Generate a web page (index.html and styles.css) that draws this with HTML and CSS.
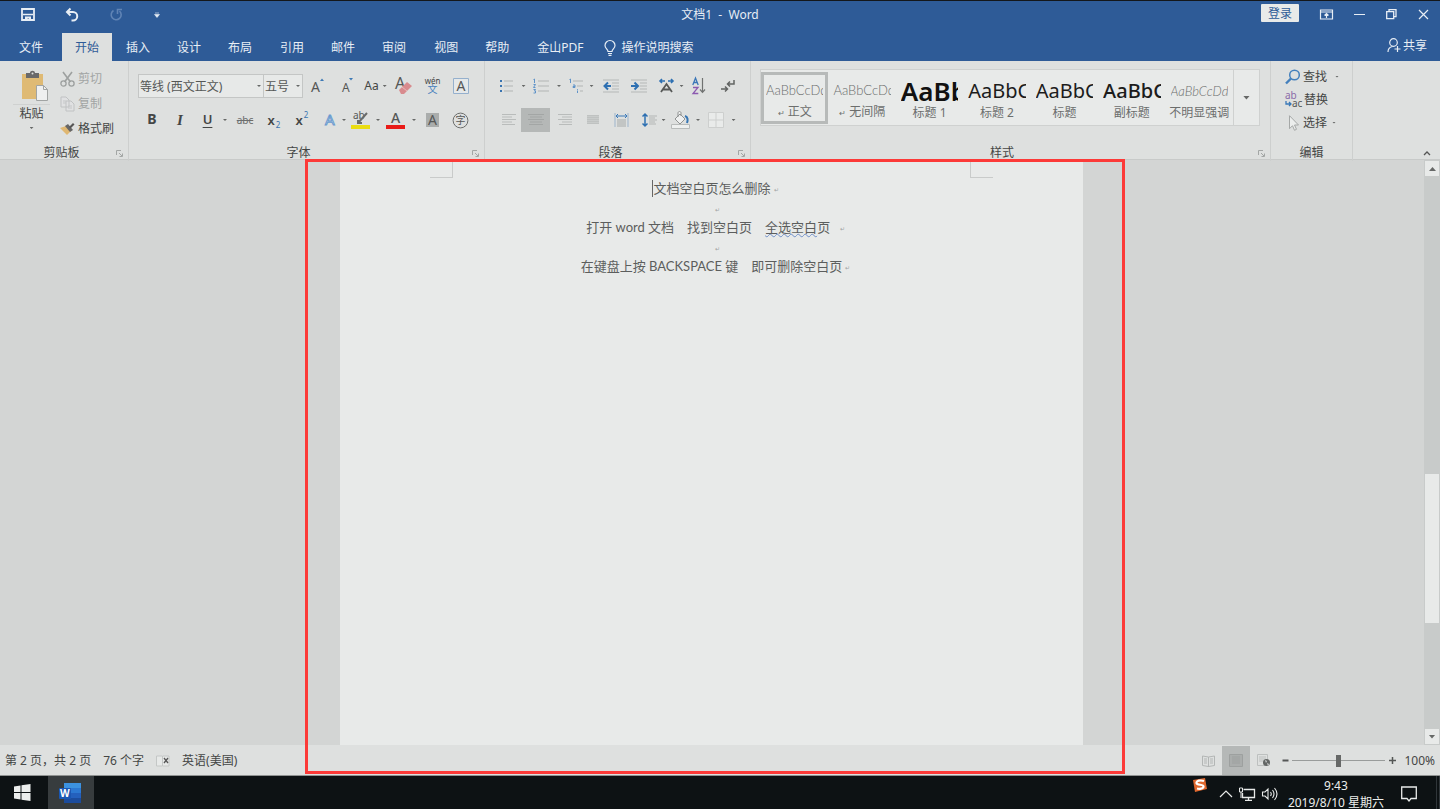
FILE: index.html
```html
<!DOCTYPE html>
<html lang="zh-CN">
<head>
<meta charset="utf-8">
<title>文档1 - Word</title>
<link rel="stylesheet" href="styles.css">
</head>
<body>
<header class="titlebar">
  <div class="quick">
    <button aria-label="保存"><svg width="14" height="14" viewBox="0 0 14 14"><path d="M1 1h12v11H1z" fill="none" stroke="#e8eef5" stroke-width="1.800"/><path d="M2 6.500h10" stroke="#e8eef5" stroke-width="1.500"/><path d="M4 8.500h6V13H8v-2.500H6.500V13H4z" fill="#e8eef5"/></svg></button>
    <button aria-label="撤消"><svg width="14" height="14" viewBox="0 0 14 14"><path d="M5.500.5 2 4l3.500 3.500M2 4h6a4 4 0 0 1 0 8.500H6.500" fill="none" stroke="#e8eef5" stroke-width="2"/></svg></button>
    <button aria-label="重复"><svg width="14" height="14" viewBox="0 0 14 14"><path d="M10.500 3a5 5 0 1 1-6-.5M8.500 6V1.500H13" fill="none" stroke="#6084b5" stroke-width="1.600"/></svg></button>
    <button aria-label="自定义快速访问工具栏"><svg width="6" height="6" viewBox="0 0 6 6"><path d="M1 1h4M0.500 2.500h5L3 5.500z" fill="#e8eef5" stroke="#e8eef5" stroke-width=".6"/></svg></button>
  </div>
  <h1 class="doc-title">文档1&nbsp; -&nbsp; Word</h1>
  <div class="window-tools">
    <button class="login">登录</button>
    <button aria-label="功能区显示选项"><svg width="13" height="11" viewBox="0 0 13 11"><path d="M.5 1h12v9H.5zM.5 3h12M6.500 9V5M4.500 6.500l2-2 2 2" fill="none" stroke="#e8eef5" stroke-width="1.200"/></svg></button>
    <button aria-label="最小化"><svg width="11" height="11" viewBox="0 0 11 11"><path d="M0 5.500h11" stroke="#e8eef5"/></svg></button>
    <button aria-label="还原"><svg width="11" height="11" viewBox="0 0 11 11"><path d="M.7 2.700h7v7h-7zM3 2.500V.7h7v7H8" fill="none" stroke="#e8eef5" stroke-width="1.300"/></svg></button>
    <button aria-label="关闭"><svg width="11" height="11" viewBox="0 0 11 11"><path d="m1 1 9 9m0-9-9 9" stroke="#e8eef5" stroke-width="1.200"/></svg></button>
  </div>
</header>
<nav class="tabs">
  <button class="file">文件</button>
  <button class="active">开始</button>
  <button>插入</button>
  <button>设计</button>
  <button>布局</button>
  <button class="wide">引用</button>
  <button>邮件</button>
  <button>审阅</button>
  <button class="wide">视图</button>
  <button>帮助</button>
  <button class="wide">金山PDF</button>
  <button class="tell"><svg width="12" height="16" viewBox="0 0 12 16"><path d="M4 11.500C4 9 1 8.500 1 5.500a5 5 0 0 1 10 0c0 3-3 3.500-3 6zM4 13.500h4M4.500 15.300h3" fill="none" stroke="#e8eef5" stroke-width="1.200"/></svg>操作说明搜索</button>
  <button class="share"><svg width="14" height="15" viewBox="0 0 14 15"><circle cx="6.500" cy="4.500" r="3.800" fill="none" stroke="#e8eef5" stroke-width="1.200"/><path d="M1 14c0-3 2-5 4.500-5.500M10.500 8v6M7.500 11h6" fill="none" stroke="#e8eef5" stroke-width="1.200"/></svg>共享</button>
</nav>

<main class="ribbon">
  <section class="group clipboard">
    <div class="clip-body">
      <button class="paste">
        <svg width="28" height="30" viewBox="0 0 28 30"><path d="M1 3h21v25H1z" fill="#dfba74"/><path d="M5 2h4c0-3 5-3 5 0h4v5H5z" fill="#69696a"/><circle cx="11.500" cy="2.500" r="1" fill="#dee0df"/><path d="M15.500 14.500h7l4 4v11h-11z" fill="#eff0f0" stroke="#a1a4a3"/><path d="M22.500 14.500v4h4" fill="none" stroke="#a1a4a3"/></svg>
        <span class="paste-label">粘贴</span><i class="caret"></i>
      </button>
      <div class="clip-list">
        <button class="dim"><svg width="15" height="16" viewBox="0 0 15 16"><path d="M3 1l7.500 10M12 1 4.500 11" stroke="#9da09f" stroke-width="1.600"/><circle cx="3.500" cy="12.500" r="2.600" fill="none" stroke="#9da09f" stroke-width="1.300"/><circle cx="11.500" cy="12.500" r="2.600" fill="none" stroke="#9da09f" stroke-width="1.300"/></svg>剪切</button>
        <button class="dim"><svg width="15" height="16" viewBox="0 0 15 16"><path d="M1 1h5l3 3v7H1zM6 5h5l3 3v7H6z" fill="#e0e1e2" stroke="#c0c2c3"/><path d="M3 5h3M3 7h3M8 10h4M8 12h4" stroke="#c5c7c8"/></svg>复制</button>
        <button><svg width="15" height="14" viewBox="0 0 15 14"><path d="m0 6 6-2 5 5-4 4z" fill="#dfb772"/><path d="m5 4 3-2 5 6-3 2z" fill="#666"/><path d="m9 5 4-4 1.500 1.500-4 4z" fill="#565656"/></svg>格式刷</button>
      </div>
    </div>
    <footer>剪贴板</footer><svg class="launcher" width="7" height="7" viewBox="0 0 7 7"><path d="M.5 5V.5H5M3 3l3 3M6.500 3.500v3h-3" fill="none" stroke="#a3a6a5"/></svg>
  </section>

  <section class="group font">
    <div class="row font-top">
      <label class="combo"><select aria-label="字体"><option>等线 (西文正文)</option></select><i class="caret"></i></label>
      <label class="combo size"><select aria-label="字号"><option>五号</option></select><i class="caret"></i></label>
      <button aria-label="增大字号"><svg width="16" height="18" viewBox="0 0 16 18"><text x="1" y="15" font-size="14">A</text><path d="m10 4 2-2.500L14 4z" fill="#3d79b5"/></svg></button>
      <button aria-label="减小字号"><svg width="16" height="18" viewBox="0 0 16 18"><text x="3" y="15" font-size="12">A</text><path d="m10 1 2 2.500L14 1z" fill="#3d79b5"/></svg></button>
      <button class="with-caret" aria-label="更改大小写">Aa<i class="caret"></i></button>
      <button aria-label="清除格式"><svg width="18" height="20" viewBox="0 0 18 20"><text x="0" y="13" font-size="16">A</text><path d="m4 14 8-8 5 4-8 8H6z" fill="#d88b8e"/><path d="m7 11 5 4" stroke="#e8b8b9"/></svg></button>
      <button class="pinyin" aria-label="拼音指南"><small>wén</small><span>文</span></button>
      <button aria-label="字符边框"><svg width="16" height="17" viewBox="0 0 16 17"><path d="M.5.5h15v15H.5z" fill="#e5e8e9" stroke="#95b0cd"/><text x="3.500" y="13" font-size="14">A</text></svg></button>
    </div>
    <div class="row font-bottom">
      <button class="bold">B</button><button class="italic">I</button><button class="under">U</button><i class="caret"></i>
      <button class="strike">abc</button>
      <button class="script">x<sub>2</sub></button><button class="script">x<sup>2</sup></button>
      <button aria-label="文本效果"><svg width="16" height="18" viewBox="0 0 16 18"><text class="outline" x="4" y="14" font-size="15">A</text></svg></button><i class="caret"></i>
      <button aria-label="突出显示"><svg width="20" height="20" viewBox="0 0 20 20"><text x="2" y="9" font-size="10">ab</text><path d="m7 13 9-10M7 10v3h4" stroke="#696b6a" stroke-width="2" fill="none"/><path d="M0 15h19v4H0z" fill="#eadd12"/></svg></button><i class="caret"></i>
      <button aria-label="字体颜色"><svg width="20" height="20" viewBox="0 0 20 20"><text x="5" y="13" font-size="14" font-weight="500">A</text><path d="M0 15h19v4H0z" fill="#e91b18"/></svg></button><i class="caret"></i>
      <button aria-label="字符底纹"><svg width="14" height="14" viewBox="0 0 14 14"><path d="M0 0h13v14H0z" fill="#aaadac"/><text x="2" y="12" font-size="14">A</text></svg></button>
      <button aria-label="带圈字符"><svg width="16" height="17" viewBox="0 0 16 17"><circle cx="7.500" cy="8.500" r="7.400" fill="none" stroke="#6b6d6c"/><text x="2.500" y="12" font-size="10">字</text></svg></button>
    </div>
    <footer>字体</footer><svg class="launcher" width="7" height="7" viewBox="0 0 7 7"><path d="M.5 5V.5H5M3 3l3 3M6.500 3.500v3h-3" fill="none" stroke="#a3a6a5"/></svg>
  </section>

  <section class="group para">
    <div class="row para-top">
      <button aria-label="项目符号"><svg width="14" height="14" viewBox="0 0 14 14"><path d="M4 2h9M4 7h9M4 12h9" stroke="#b2b5b4"/><path d="M0 1h2v2H0zM0 6h2v2H0zM0 11h2v2H0z" fill="#3a74b0"/></svg></button><i class="caret"></i>
      <button aria-label="编号"><svg width="16" height="16" viewBox="0 0 16 16"><path d="M5 3h11M5 8h11M5 13h11" stroke="#b2b5b4"/><path d="M.5 1.500 1.500 1v4M.5 6.500h2L.5 9.500h2M.5 11.500h2L1.500 13h1v2h-2" fill="none" stroke="#5f93c8"/></svg></button><i class="caret"></i>
      <button aria-label="多级列表"><svg width="20" height="16" viewBox="0 0 20 16"><path d="M7 3h10M11 8h6M14 13h3" stroke="#b2b5b4"/><path d="M3.500 1.500 4.500 1v4M7 7h2v2.500H7V8.500h2M11.500 11v.8M11.500 12.500V15" fill="none" stroke="#5f93c8"/></svg></button><i class="caret"></i>
      <button aria-label="减少缩进"><svg width="17" height="14" viewBox="0 0 17 14"><path d="M0 1h16M9 4h7M9 7h7M9 10h7M0 13h16" stroke="#b5b8b7"/><path d="M8 7H2M5 3.500 1.500 7 5 10.500" fill="none" stroke="#2e70b2" stroke-width="2"/></svg></button>
      <button aria-label="增加缩进"><svg width="17" height="14" viewBox="0 0 17 14"><path d="M0 1h16M9 4h7M9 7h7M9 10h7M0 13h16" stroke="#b5b8b7"/><path d="M0 7h6M3.500 3.500 7 7l-3.500 3.500" fill="none" stroke="#2e70b2" stroke-width="2"/></svg></button>
      <button aria-label="中文版式"><svg width="16" height="16" viewBox="0 0 16 16"><path d="M2 3h5M4 1 2 3l2 2M10 3h5M13 1l2 2-2 2" fill="none" stroke="#2e70b2" stroke-width="1.600"/><path d="m3 14 5.500-8 5.500 8M5 11.500h7" fill="none" stroke="#575958" stroke-width="1.800"/></svg></button><i class="caret"></i>
      <button aria-label="排序"><svg width="14" height="18" viewBox="0 0 14 18"><path d="m.8 8 2.700-7 2.700 7M1.800 5.500h3.500" fill="none" stroke="#3a76b7" stroke-width="1.300"/><path d="M1 10.500h5L1 16.500h5.300" fill="none" stroke="#8c5ab0" stroke-width="1.300"/><path d="M10.500 1v14M8 12.500l2.500 2.800 2.500-2.800" fill="none" stroke="#707271" stroke-width="1.200"/></svg></button>
      <button aria-label="显示编辑标记"><svg width="15" height="14" viewBox="0 0 15 14"><path d="M13 1v4H7M9 2.500 6.500 5 9 7.500M0 10h6M4 7.500 6.500 10 4 12.500" fill="none" stroke="#626463" stroke-width="1.500"/></svg></button>
    </div>
    <div class="row para-bottom">
      <button aria-label="左对齐"><svg width="14" height="12" viewBox="0 0 14 12"><path d="M0 .5h14M0 3h10M0 5.500h14M0 8h10M0 10.500h13" stroke="#b9bcbb"/></svg></button>
      <button class="pressed" aria-label="居中"><svg width="16" height="12" viewBox="0 0 16 12"><path d="M0 .5h16M2 3h12M0 5.500h16M2 8h12M1 10.500h14" stroke="#a3a6a5"/></svg></button>
      <button aria-label="右对齐"><svg width="14" height="12" viewBox="0 0 14 12"><path d="M0 .5h14M4 3h10M0 5.500h14M4 8h10M1 10.500h13" stroke="#b9bcbb"/></svg></button>
      <button aria-label="两端对齐"><svg width="12" height="10" viewBox="0 0 12 10"><path d="M0 0h12v9H0z" fill="#c9cccb"/><path d="M0 .5h12M0 2.500h12M0 4.500h12M0 6.500h12M0 8.500h12" stroke="#bfc2c1"/></svg></button>
      <button aria-label="分散对齐"><svg width="15" height="15" viewBox="0 0 15 15"><path d="M1 0v14M14 0v14" stroke="#9db4cb"/><path d="M3 6h9v8H3z" fill="#c2c5c4"/><path d="M2 3h11M4 1 2 3l2 2M11 1l2 2-2 2" fill="none" stroke="#3978b8"/></svg></button>
      <button aria-label="行距"><svg width="16" height="14" viewBox="0 0 16 14"><path d="M5 1v12M2.500 3.500 5 1l2.500 2.500M2.500 10.500 5 13l2.500-2.500" fill="none" stroke="#2e70b2" stroke-width="1.500"/><path d="M9 3h8M9 5h6M9 7h8M9 9h6M9 11h7" stroke="#b3b6b5"/></svg></button><i class="caret"></i>
      <button aria-label="底纹"><svg width="20" height="18" viewBox="0 0 20 18"><path d="m9 3 5 5-5 5-5-5zM7 6V2c0-2 3-2 3 0v3" fill="#eff0f0" stroke="#909392"/><path d="M14 5c3 1 3 4 2 7" fill="none" stroke="#3776b3" stroke-width="2"/><path d="M.5 13.500h18v4H.5z" fill="#eef0ef" stroke="#b8bbba"/></svg></button><i class="caret"></i>
      <button aria-label="边框"><svg width="16" height="16" viewBox="0 0 16 16"><path d="M.5.5h15v15H.5zM8 0v16M0 8h16" fill="#e9ebea" stroke="#cdcfce"/></svg></button><i class="caret"></i>
    </div>
    <footer>段落</footer><svg class="launcher" width="7" height="7" viewBox="0 0 7 7"><path d="M.5 5V.5H5M3 3l3 3M6.500 3.500v3h-3" fill="none" stroke="#a3a6a5"/></svg>
  </section>

  <section class="group styles">
    <div class="gallery">
      <button class="chosen"><span class="sample">AaBbCcDd</span><span class="name"><small>↵</small> 正文</span></button>
      <button><span class="sample">AaBbCcDd</span><span class="name"><small>↵</small> 无间隔</span></button>
      <button><span class="sample h1">AaBb</span><span class="name">标题 1</span></button>
      <button><span class="sample h2">AaBbC</span><span class="name">标题 2</span></button>
      <button><span class="sample h2">AaBbC</span><span class="name">标题</span></button>
      <button><span class="sample h2 strong">AaBbC</span><span class="name">副标题</span></button>
      <button><span class="sample slant">AaBbCcDd</span><span class="name">不明显强调</span></button>
      <button class="more" aria-label="其他样式"><i class="caret large"></i></button>
    </div>
    <footer>样式</footer><svg class="launcher" width="7" height="7" viewBox="0 0 7 7"><path d="M.5 5V.5H5M3 3l3 3M6.500 3.500v3h-3" fill="none" stroke="#a3a6a5"/></svg>
  </section>

  <section class="group edit">
    <div class="edit-list">
      <button><svg width="16" height="16" viewBox="0 0 16 16"><circle cx="9.500" cy="6" r="4.800" fill="none" stroke="#4480bd" stroke-width="1.500"/><path d="m6 9.500-5 5" stroke="#4480bd" stroke-width="2.400"/></svg>查找<i class="caret far"></i></button>
      <button><svg width="17" height="16" viewBox="0 0 17 16"><text class="from" x="0" y="7" font-size="10">ab</text><text x="7" y="15" font-size="10">ac</text><path d="M1 9v3h5M4 10l2 2-2 2" fill="none" stroke="#3978b8" stroke-width="1.300"/></svg>替换</button>
      <button><svg width="16" height="16" viewBox="0 0 16 16"><path d="M4.500.7v13l3-3 2 4.600 2-1-2-4.300h4z" fill="#eceeed" stroke="#a5a8a7"/></svg>选择<i class="caret"></i></button>
    </div>
    <footer>编辑</footer>
  </section>
  <button class="collapse" aria-label="折叠功能区"><svg width="8" height="6" viewBox="0 0 8 6"><path d="m1 5 3-3 3 3" fill="none" stroke="#555" stroke-width="1.300"/></svg></button>
</main>

<section class="workspace">
  <div class="canvas">
    <article class="page">
      <i class="corner left"></i><i class="corner right"></i>
      <p><span class="cursor"></span>文档空白页怎么删除<small>↵</small></p>
      <p class="empty"><small>↵</small></p>
      <p>打开 word 文档　找到空白页　<span class="wavy">全选空白</span>页 &nbsp;<small>↵</small></p>
      <p class="empty"><small>↵</small></p>
      <p>在键盘上按 BACKSPACE 键　即可删除空白页<small>↵</small></p>
    </article>
  </div>
  <div class="scrollbar">
    <button aria-label="向上滚动"><i class="caret large up"></i></button>
    <div class="track"><div class="thumb"></div></div>
    <button aria-label="向下滚动"><i class="caret large"></i></button>
  </div>
  <div class="highlight"></div>
</section>

<footer class="status">
  <span>第 2 页，共 2 页</span><span>76 个字</span>
  <svg width="14" height="12" viewBox="0 0 14 12"><path d="M.5 1h6v10h-6zM7 1h6v10H7" fill="#e7e9e8" stroke="#c4c7c6"/><path d="m8 3 4 5m0-5L8 8" stroke="#555" stroke-width="1.300"/></svg>
  <span>英语(美国)</span>
  <div class="views">
    <button aria-label="阅读视图"><svg width="13" height="12" viewBox="0 0 13 12"><path d="M6.500 2v10M.5 1l6 1 6-1v9.500l-6 1-6-1zM2 4h3M2 6h3M2 8h3M8 4h3M8 6h3M8 8h3" fill="none" stroke="#b3b6b5"/></svg></button>
    <button class="pressed" aria-label="页面视图"><svg width="14" height="13" viewBox="0 0 14 13"><path d="M.5.5h13v12H.5zM3 3h8M3 5h8M3 7h8M3 9h8" fill="#aaadac" stroke="#9da09f"/></svg></button>
    <button aria-label="Web 版式"><svg width="14" height="13" viewBox="0 0 14 13"><path d="M.5.5h10v11H.5zM2 3h7M2 5h7M2 7h5" fill="none" stroke="#bdc0bf"/><circle cx="9.500" cy="8.500" r="3.500" fill="#636665"/><path d="m8 6 2 1-1 2zM10 9l2 1-1 2z" fill="#d6d8d7"/></svg></button>
    <button class="zoom-btn" aria-label="缩小"><svg width="7" height="7" viewBox="0 0 7 7"><path d="M.5 3.500h6" stroke="#555756" stroke-width="2"/></svg></button>
    <input type="range" min="0" max="100" value="50" aria-label="显示比例">
    <button class="zoom-btn" aria-label="放大"><svg width="7" height="7" viewBox="0 0 7 7"><path d="M0 3.500h7M3.500 0v7" stroke="#555756" stroke-width="1.500"/></svg></button>
    <span class="percent">100%</span>
  </div>
</footer>

<footer class="taskbar">
  <button class="start" aria-label="开始"><svg width="17" height="17" viewBox="0 0 17 17"><path d="M0 2.500 6.500 1.500V8H0zM7.500 1.300 16.500 0v8h-9zM0 9h6.500v6.500L0 14.500zM7.500 9h9v8l-9-1.300z" fill="#eceeed"/></svg></button>
  <button class="word" aria-label="Word"><svg width="22" height="20" viewBox="0 0 22 20"><path d="M5 0h17v5H5z" fill="#3c92e0"/><path d="M5 5h17v5H5z" fill="#2c78d2"/><path d="M5 10h17v5H5z" fill="#2460bd"/><path d="M5 15h17v5H5z" fill="#1c4c9d"/><rect y="5" width="12" height="11" rx="1" fill="#1a57b3"/><text class="logo" x="1" y="14" font-size="10">W</text></svg></button>
  <div class="tray">
    <svg class="sogou" width="16" height="16" viewBox="0 0 16 16"><path d="m1 3 12-2 2 11-12 3z" fill="#df682f"/><path d="M12 4C9 3 4 3.500 4.500 6s7 1 7 3.500S7 12 5 11.500" fill="none" stroke="#fff" stroke-width="2.200"/></svg>
    <svg width="14" height="8" viewBox="0 0 14 8"><path d="m1 7 6-6 6 6" fill="none" stroke="#e8eae9" stroke-width="1.200"/></svg>
    <svg width="17" height="14" viewBox="0 0 17 14"><path d="M4.500 2.500h11v8H3.500V6M9.500 10v3M6 13.300h7" fill="none" stroke="#e8eae9" stroke-width="1.300"/><path d="M.5 1h3v4h-3zM2 5v6" fill="#0d1214" stroke="#e8eae9"/></svg>
    <svg width="16" height="14" viewBox="0 0 16 14"><path d="M.5 5h2.500l3-3v10L3 9H.5zM8.500 5q1.500 2 0 4M10.500 3q3 4 0 8M12.500 1q5 6 0 12" fill="none" stroke="#e8eae9" stroke-width="1.100"/></svg>
    <div class="clock"><time>9:43</time><span>2019/8/10 星期六</span></div>
    <svg class="note" width="16" height="16" viewBox="0 0 16 16"><path d="M.7 1h14.600v11.500H10L8 15l-2-2.500H.7z" fill="none" stroke="#e8eae9" stroke-width="1.300"/></svg>
  </div>
</footer>
</body>
</html>
```
FILE: styles.css
```css
* { box-sizing: border-box; }
body {
  margin: 0;
  height: 100vh;
  display: flex;
  flex-direction: column;
  overflow: hidden;
  background: #d3d5d4;
  color: #444645;
  font: 12px/16px "Noto Sans", "Noto Sans CJK SC", sans-serif;
}
button {
  display: flex;
  align-items: center;
  justify-content: center;
  margin: 0;
  padding: 0;
  border: 0;
  background: none;
  color: inherit;
  font: inherit;
  white-space: nowrap;
}
svg { display: block; flex: none; overflow: visible; }
svg text { fill: #555756; }
svg .outline { fill: #e2e8ee; stroke: #6b9bcf; stroke-width: 1; }
svg .from { fill: #8a6aa8; }
svg .logo { fill: #fff; font-weight: 700; }
.caret {
  display: block;
  flex: none;
  width: 4px;
  height: 2px;
  background: #666867;
  clip-path: polygon(0 0, 100% 0, 50% 100%);
  place-self: center;
}
.caret.large { width: 7px; height: 4px; }
.caret.up { transform: rotate(180deg); }

.titlebar {
  flex: none;
  display: grid;
  grid-template-columns: 1fr auto 1fr;
  height: 33px;
  border-top: 1px solid #14171a;
  background: #2e5b97;
  color: #e8eef5;
}
.quick { display: flex; align-items: center; padding: 0 0 4px 21px; gap: 30px; }
.quick button { min-width: 14px; }
.quick button:last-child { min-width: 8px; }
.doc-title { margin: 0; font-size: 12px; font-weight: 400; line-height: 28px; }
.window-tools { display: flex; justify-content: flex-end; gap: 21px; padding: 3px 11px 9px 0; }
.login { width: 38px; height: 18px; padding-top: 2px; background: #e8eae9; color: #2e5b97; border-radius: 1px; }

.tabs { flex: none; display: flex; height: 28px; background: #2e5b97; color: #e8eef5; gap: 1px; }
.tabs button { padding: 1px 13px 0; }
.tabs .file { padding: 1px 18px 0 19px; }
.tabs .active { background: #dee0df; color: #2e5b97; }
.tabs .wide { padding-left: 14px; }
.tabs .tell { gap: 5px; padding: 1px 7px 0; }
.tabs .share { margin-left: auto; padding: 0 13px 3px 0; gap: 2px; }

.ribbon {
  flex: none;
  display: grid;
  grid-template-columns: 129px 356px 266px 520px 82px 1fr;
  height: 99px;
  background: #dee0df;
  border-bottom: 1px solid #c8cac9;
}
.group {
  position: relative;
  display: flex;
  flex-direction: column;
  padding: 10px 9px 0;
  gap: 4px;
  border-right: 1px solid #cdcfce;
}
.group > footer { margin-top: auto; padding-right: 16px; text-align: center; line-height: 16px; }
.launcher { position: absolute; right: 5px; bottom: 4px; }
.row { display: grid; height: 30px; align-items: center; }
.row button { height: 24px; }
.clip-body { display: flex; align-items: flex-start; gap: 10px; }
.group .clip-body + footer { padding-right: 18px; }
.clipboard { padding: 5px 0 0 13px; }
.paste { flex-direction: column; width: 37px; gap: 3px; padding-top: 5px; }
.paste svg { margin-left: 6px; }
.paste-label { border-top: 1px solid #cfd1d0; width: 100%; line-height: 17px; }
.paste .caret { margin-top: 2px; }
.clip-list, .edit-list { display: flex; flex-direction: column; align-items: flex-start; }
.clip-list button { height: 25px; gap: 3px; }
.dim { color: #a2a5a4; }

.font-top { grid-template-columns: 126px 39px 29px 29px 29px 28px 29px 28px; }
.font-bottom { grid-template-columns: 28px 28px 27px 8px 32px 26px 30px 24px 6px 28px 6px 30px 6px 32px 23px; }
.combo { position: relative; display: block; }
.combo select {
  display: block;
  width: 100%;
  height: 24px;
  margin: 0;
  padding: 2px 1px 0;
  border: 1px solid #c4c6c5;
  border-radius: 0;
  appearance: none;
  background: #e7e9e8;
  color: #555756;
  font: inherit;
}
.combo.size select { border-left: 0; }
.combo .caret { position: absolute; right: 3px; top: 11px; }
.with-caret { gap: 4px; }
.pinyin { flex-direction: column; }
.pinyin small { font-size: 8px; line-height: 7px; }
.pinyin span { color: #4a82bd; font-size: 10px; line-height: 11px; }
.bold { font-size: 14px; font-weight: 700; }
.row .bold, .row .under { padding-bottom: 2px; }
.italic { font: italic 700 15px/20px "Liberation Serif", serif; }
.under { font-size: 13px; font-weight: 600; text-decoration: underline; text-underline-offset: 3px; }
.strike { color: #6c6e6d; font-size: 10px; text-decoration: line-through; }
.script { font-size: 13px; font-weight: 600; }
.script sub, .script sup { color: #3a74b0; font-size: 8px; font-weight: 400; line-height: 10px; margin-left: 1px; }
.script sub { align-self: flex-end; margin-bottom: 2px; }
.script sup { align-self: flex-start; margin-top: 2px; }

.para { padding-left: 11px; }
.para-top { grid-template-columns: 22px 11px 24px 12px 22px 9px 30px 26px 27px 5px 30px 28px; }
.para-bottom { grid-template-columns: 25px 29px 29px 28px 28px 25px 7px 27px 8px 28px 7px; }
.pressed { background: #b5b8b7; }

.styles { padding: 8px 10px 0 9px; }
.gallery { display: flex; height: 57px; border: 1px solid #cfd1d0; background: #e8eae9; }
.gallery button {
  flex: 1;
  min-width: 0;
  flex-direction: column;
  justify-content: flex-end;
  padding: 0 2px;
  border: 3px solid transparent;
}
.gallery .chosen { border-color: #b7bab9; margin: 2px 0 1px; }
.gallery button:not(.chosen):not(.more) { padding-bottom: 1px; }
.gallery .more { flex: 0 0 26px; justify-content: center; border: 0; border-left: 1px solid #cfd1d0; }
.gallery .name { color: #6c6e6d; line-height: 16px; }
.gallery small { font-size: 8px; }
.sample {
  width: 100%;
  overflow: hidden;
  text-align: left;
  color: #6c6e6d;
  font-family: Lato, sans-serif;
  font-size: 13px;
  font-weight: 300;
  line-height: 28px;
}
.sample.h1 { color: #111; font: 600 26px/28px "Noto Sans", sans-serif; }
.sample.h2 { color: #1c1c1c; font: 400 20px/28px "Noto Sans", sans-serif; }
.sample.strong { font-weight: 500; }
.sample.slant { font-style: italic; }

.edit { padding: 4px 4px 0 14px; }
.group.edit > footer { padding-right: 10px; }
.edit-list button { height: 23px; gap: 2px; }
.edit-list .caret { margin-left: 3px; }
.edit-list .caret.far { margin-left: 6px; }
.collapse { align-self: end; justify-self: end; padding: 5px 9px; }

.workspace { position: relative; flex: 1; display: flex; min-height: 0; }
.canvas { flex: 1; display: flex; justify-content: center; padding-right: 1px; }
.page {
  position: relative;
  width: 743px;
  padding: 18px 0 0;
  background: #e8eae9;
  color: #5c5e5d;
  font: 400 13px/20px Lato, "Noto Sans CJK SC", sans-serif;
}
.page p { display: flex; align-items: center; justify-content: center; height: 20px; margin: 0; padding-left: 8px; white-space: pre; }
.page p.empty { height: 19px; }
.page small { margin: 4px 0 0 3px; color: #a0a3a2; font-size: 6px; line-height: 8px; }
.cursor { width: 1px; height: 17px; background: #666; }
.wavy { text-decoration: underline wavy #6f8fc8 1px; text-underline-offset: 1px; }
.corner { position: absolute; top: 0; width: 23px; height: 18px; border-bottom: 1px solid #c9cbca; }
.corner.left { left: 90px; border-right: 1px solid #c9cbca; }
.corner.right { right: 90px; border-left: 1px solid #c9cbca; }
.scrollbar { display: flex; flex-direction: column; width: 16px; padding: 1px; background: #c8cbca; }
.scrollbar button { height: 15px; background: #e8eae9; }
.track { flex: 1; display: flex; flex-direction: column; justify-content: flex-end; padding-bottom: 106px; }
.thumb { height: 149px; background: #e8eae9; }
.highlight {
  position: absolute;
  z-index: 2;
  left: calc(50% - 415px);
  width: 820px;
  top: -1px;
  bottom: -29px;
  border: 3px solid #fc3a38;
  pointer-events: none;
}

.status {
  flex: none;
  display: flex;
  align-items: center;
  gap: 12px;
  height: 31px;
  padding: 1px 5px 0;
  border-bottom: 1px solid #8f9291;
  background: #dee0df;
}
.views { display: flex; align-items: center; align-self: stretch; margin-left: auto; }
.views button { align-self: stretch; width: 28px; }
.views .zoom-btn { width: 14px; }
.views input { width: 93px; height: 14px; margin: 0; appearance: none; background: linear-gradient(#999c9b, #999c9b) center / 100% 1px no-repeat; }
.views input::-webkit-slider-thumb { appearance: none; width: 5px; height: 12px; background: #666867; }
.percent { margin-left: 5px; }

.taskbar { flex: none; display: flex; height: 33px; background: #0d1214; color: #eceeed; overflow: hidden; }
.start { width: 48px; padding-right: 3px; }
.word { width: 46px; background: #373c3e; padding-right: 2px; }
.tray { display: flex; align-items: center; gap: 6px; margin-left: auto; padding: 3px 19px 0 0; border-right: 4px double #30363a; }
.tray .sogou { align-self: flex-start; margin: -2px 5px 0 0; }
.clock { display: flex; flex-direction: column; align-items: center; gap: 1px; margin: 0 11px 0 4px; white-space: nowrap; }
```
